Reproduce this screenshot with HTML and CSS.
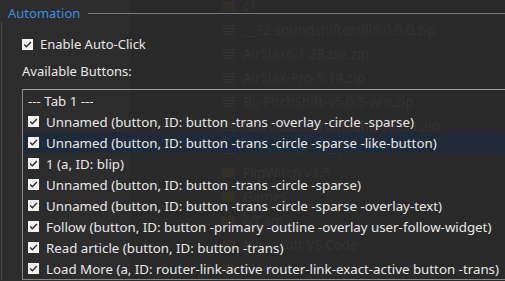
FILE: index.html
```html
<!DOCTYPE html>
<html>
<head>
<meta charset="utf-8">
<link rel="stylesheet" href="styles.css">
</head>
<body>
<div class="ghost">
  <div class="ghost-nav"></div>
  <div class="ghost-files">
    <div class="gf"><span class="gi folder"></span>c1</div>
    <div class="gf"><span class="gi"></span>__32-soundshifter.dll5.0.0.0.zip</div>
    <div class="gf"><span class="gi"></span>AirSlax6.1.2Base.zip</div>
    <div class="gf"><span class="gi"></span>AirSlax-Pro-5.14.zip</div>
    <div class="gf"><span class="gi"></span>BL-PitchShift-v5.0.5-win.zip</div>
    <div class="gf"><span class="gi"></span>fabricatedstrumlights10.5.1.zip</div>
    <div class="gf"><span class="gi"></span>whetwatcher.zip</div>
    <div class="gf"><span class="gi folder"></span>FlipWitch v1.5</div>
    <div class="gf"><span class="gi folder"></span>Games</div>
    <div class="gf"><span class="gi folder"></span>iVCam</div>
    <div class="gf"><span class="gi folder"></span>Microsoft VS Code</div>
    <div class="gf"><span class="gi folder"></span>Mods</div>
  </div>
</div>

<div class="group">
  <div class="group-head">
    <span class="legend">Automation</span>
    <span class="rule"></span>
  </div>
  <div class="group-body">
    <label class="check-row">
      <svg class="cb" width="11" height="11" viewBox="0 0 11 11"><rect x="0" y="0" width="11" height="11" fill="#f4f4f4"/><path d="M2.2 5.6 L4.4 7.8 L8.9 3.1" fill="none" stroke="#2a2a2a" stroke-width="1.4"/></svg>
      <span>Enable Auto-Click</span>
    </label>
    <div class="label">Available Buttons:</div>
    <div class="listbox">
      <div class="item head">--- Tab 1 ---</div>
      <div class="item"><svg class="cb" width="11" height="11" viewBox="0 0 11 11"><rect width="11" height="11" fill="#f4f4f4"/><path d="M2.2 5.6 L4.4 7.8 L8.9 3.1" fill="none" stroke="#2a2a2a" stroke-width="1.4"/></svg><span>Unnamed (button, ID: button -trans -overlay -circle -sparse)</span></div>
      <div class="item sel"><svg class="cb" width="11" height="11" viewBox="0 0 11 11"><rect width="11" height="11" fill="#f4f4f4"/><path d="M2.2 5.6 L4.4 7.8 L8.9 3.1" fill="none" stroke="#2a2a2a" stroke-width="1.4"/></svg><span>Unnamed (button, ID: button -trans -circle -sparse -like-button)</span></div>
      <div class="item"><svg class="cb" width="11" height="11" viewBox="0 0 11 11"><rect width="11" height="11" fill="#f4f4f4"/><path d="M2.2 5.6 L4.4 7.8 L8.9 3.1" fill="none" stroke="#2a2a2a" stroke-width="1.4"/></svg><span>1 (a, ID: blip)</span></div>
      <div class="item"><svg class="cb" width="11" height="11" viewBox="0 0 11 11"><rect width="11" height="11" fill="#f4f4f4"/><path d="M2.2 5.6 L4.4 7.8 L8.9 3.1" fill="none" stroke="#2a2a2a" stroke-width="1.4"/></svg><span>Unnamed (button, ID: button -trans -circle -sparse)</span></div>
      <div class="item"><svg class="cb" width="11" height="11" viewBox="0 0 11 11"><rect width="11" height="11" fill="#f4f4f4"/><path d="M2.2 5.6 L4.4 7.8 L8.9 3.1" fill="none" stroke="#2a2a2a" stroke-width="1.4"/></svg><span>Unnamed (button, ID: button -trans -circle -sparse -overlay-text)</span></div>
      <div class="item"><svg class="cb" width="11" height="11" viewBox="0 0 11 11"><rect width="11" height="11" fill="#f4f4f4"/><path d="M2.2 5.6 L4.4 7.8 L8.9 3.1" fill="none" stroke="#2a2a2a" stroke-width="1.4"/></svg><span>Follow (button, ID: button -primary -outline -overlay user-follow-widget)</span></div>
      <div class="item"><svg class="cb" width="11" height="11" viewBox="0 0 11 11"><rect width="11" height="11" fill="#f4f4f4"/><path d="M2.2 5.6 L4.4 7.8 L8.9 3.1" fill="none" stroke="#2a2a2a" stroke-width="1.4"/></svg><span>Read article (button, ID: button -trans)</span></div>
      <div class="item"><svg class="cb" width="11" height="11" viewBox="0 0 11 11"><rect width="11" height="11" fill="#f4f4f4"/><path d="M2.2 5.6 L4.4 7.8 L8.9 3.1" fill="none" stroke="#2a2a2a" stroke-width="1.4"/></svg><span>Load More (a, ID: router-link-active router-link-exact-active button -trans)</span></div>
    </div>
  </div>
</div>
</body>
</html>
```

FILE: styles.css
```css
html, body {
  margin: 0;
  padding: 0;
}
body {
  width: 505px;
  height: 281px;
  overflow: hidden;
  background: #2a2a2a;
  font-family: "Noto Sans", "Open Sans", sans-serif;
  font-size: 13px;
  color: #e8e8e8;
  position: relative;
}

/* faint explorer window seen through the translucent panel */
.ghost {
  position: absolute;
  inset: 0;
  display: flex;
  z-index: 0;
}
.ghost-nav {
  width: 130px;
  background: #2d2d2d;
}
.ghost-files {
  flex: 1;
  padding-left: 92px;
  margin-top: -6px;
  display: flex;
  flex-direction: column;
}
.gf {
  height: 24px;
  display: flex;
  align-items: center;
  gap: 8px;
  color: #333333;
  font-size: 13.5px;
  white-space: nowrap;
}
.gi {
  width: 13px;
  height: 10px;
  background: repeating-linear-gradient(#333 0 1px, #2b2b2b 1px 3px);
}
.gi.folder {
  background: #322f28;
}

.group {
  position: relative;
  z-index: 1;
  display: flex;
  flex-direction: column;
}
.group-head {
  height: 26px;
  display: flex;
  align-items: center;
  gap: 8px;
  padding-left: 8px;
}
.legend {
  color: #3c8ee6;
  font-size: 13px;
}
.rule {
  flex: 1;
  height: 1px;
  background: #777;
}
.group-body {
  margin-top: -4px;
  margin-left: 1px;
  border-left: 1px solid #4a4a4a;
  padding-left: 20px;
  padding-top: 12px;
}
.check-row {
  height: 20px;
  display: flex;
  align-items: center;
  gap: 7px;
}
.cb {
  flex: none;
  display: block;
}
.label {
  height: 20px;
  margin-top: 7px;
  display: flex;
  align-items: center;
}
.listbox {
  margin-top: 8px;
  border: 1px solid #858585;
  border-top-color: #9c9c9c;
  border-right: none;
  display: flex;
  flex-direction: column;
  font-size: 13.3px;
}
.item {
  height: 21px;
  display: flex;
  align-items: center;
  gap: 7px;
  padding-left: 5px;
  white-space: nowrap;
}
.item.sel {
  background: #1f2b38;
}
```
